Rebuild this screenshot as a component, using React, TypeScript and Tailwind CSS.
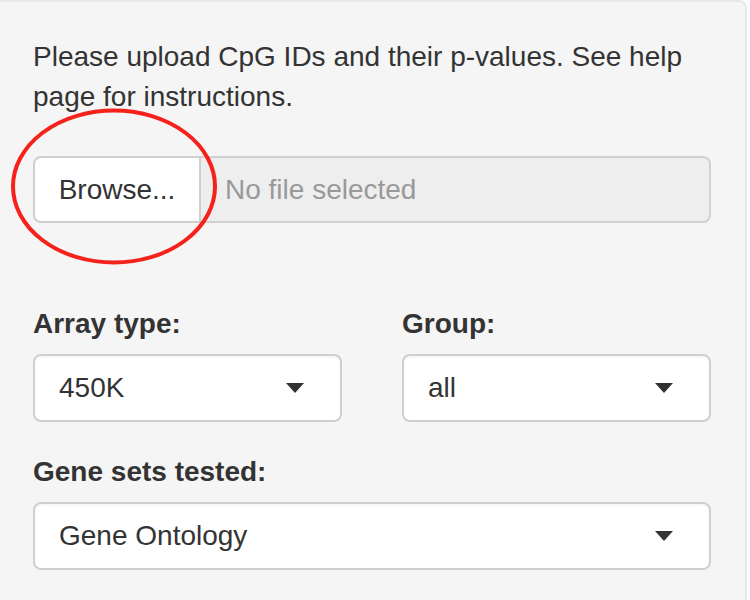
import React from "react";

function Caret() {
  return (
    <svg width="18" height="10" viewBox="0 0 18 10" className="shrink-0">
      <path d="M0 0 L18 0 L9 10 Z" fill="#333" />
    </svg>
  );
}

function Select({ value, className }: { value: string; className?: string }) {
  return (
    <div
      className={
        "h-[68px] bg-white border-2 border-[#cfcfcf] rounded-[8px] flex items-center justify-between pl-[24px] pr-[36px] shadow-[inset_0_2px_2px_rgba(0,0,0,0.04)] " +
        (className ?? "")
      }
    >
      <span className="text-[28px] text-[#333]">{value}</span>
      <Caret />
    </div>
  );
}

export default function App() {
  return (
    <div
      className="w-[750px] h-[600px] overflow-hidden bg-white"
      style={{ fontFamily: '"Liberation Sans", Arial, sans-serif' }}
    >
      <div className="relative ml-[-20px] w-[767px] h-[620px] bg-[#f5f5f5] border-2 border-[#e8e8e8] rounded-[8px] pl-[51px] pr-[34px] pt-[35px] text-[#333]">
        <p className="text-[28px] leading-[40px] w-[690px]">
          Please upload CpG IDs and their p-values. See help page for instructions.
        </p>

        <div className="mt-[39px] flex h-[67px] w-[678px]">
          <div className="w-[168px] h-full bg-white border-2 border-[#cfcfcf] rounded-l-[8px] flex items-center justify-center text-[28px] text-[#333]">
            Browse...
          </div>
          <div className="flex-1 h-full bg-[#eeeeee] border-2 border-l-0 border-[#d0d0d0] rounded-r-[8px] flex items-center pl-[24px] text-[28px] text-[#999]">
            No file selected
          </div>
        </div>

        <div className="mt-[81px] grid grid-cols-2 gap-x-[60px] w-[678px]">
          <div>
            <div className="text-[28px] leading-[40px] font-bold mb-[10px]">Array type:</div>
            <Select value="450K" />
          </div>
          <div>
            <div className="text-[28px] leading-[40px] font-bold mb-[10px]">Group:</div>
            <Select value="all" />
          </div>
        </div>

        <div className="mt-[30px] w-[678px]">
          <div className="text-[28px] leading-[40px] font-bold mb-[10px]">Gene sets tested:</div>
          <Select value="Gene Ontology" />
        </div>

        <svg
          className="absolute pointer-events-none"
          style={{ left: 20, top: 100 }}
          width="230"
          height="175"
          viewBox="0 0 230 175"
        >
          <ellipse cx="112" cy="84.5" rx="101" ry="76" fill="none" stroke="#f5221b" strokeWidth="4" />
        </svg>
      </div>
    </div>
  );
}
